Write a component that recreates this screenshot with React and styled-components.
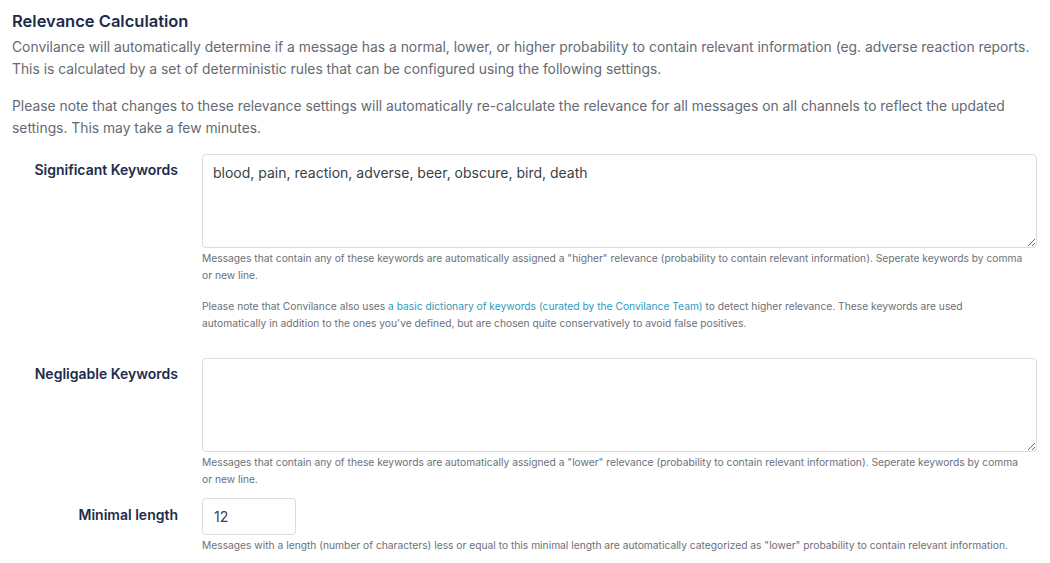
import React from "react";
import styled, { createGlobalStyle } from "styled-components";

const Global = createGlobalStyle`
  html, body { margin: 0; padding: 0; background: #fff; }
  body { font-family: Inter, "Noto Sans", sans-serif; -webkit-font-smoothing: antialiased; }
`;

const Page = styled.div`
  padding: 10px 13px 0 12px;
`;

const Title = styled.h2`
  margin: 0 0 4px;
  font-size: 16.5px;
  font-weight: 600;
  color: #1d2b4c;
  line-height: 22px;
`;

const Lead = styled.p`
  margin: 0 0 15px;
  font-size: 13.85px;
  line-height: 22px;
  color: #656a73;
  font-weight: 400;
`;

const Form = styled.div`
  display: grid;
  grid-template-columns: 166px 1fr;
  column-gap: 24px;
  margin-top: 5px;
`;

const Label = styled.label`
  text-align: right;
  font-size: 14px;
  font-weight: 600;
  color: #1d2b4c;
  padding-top: ${(p) => p.$top || 8}px;
`;

const Field = styled.div`
  display: flex;
  flex-direction: column;
  margin-bottom: ${(p) => p.$mb || 0}px;
`;

const TextArea = styled.textarea`
  box-sizing: border-box;
  width: 100%;
  height: 94px;
  border: 1px solid #dcdcdc;
  border-radius: 4px;
  padding: 9px 10px;
  font-family: Inter, "Noto Sans", sans-serif;
  font-size: 14px;
  color: #3a3f47;
  resize: vertical;
  outline: none;
  display: block;
`;

const Input = styled.input`
  box-sizing: border-box;
  width: 94px;
  height: 37px;
  border: 1px solid #dcdcdc;
  border-radius: 4px;
  padding: 0 11px;
  font-family: Inter, "Noto Sans", sans-serif;
  font-size: 14px;
  color: #3a3f47;
  outline: none;
`;

const Help = styled.p`
  margin: ${(p) => p.$mt || 2}px 0 0;
  padding-right: 11px;
  font-size: 10.25px;
  line-height: 17px;
  color: #6b7079;
  font-weight: 400;
`;

const Link = styled.a`
  color: #2f9bbd;
  text-decoration: none;
`;

export default function App() {
  return (
    <Page>
      <Global />
      <Title>Relevance Calculation</Title>
      <Lead>
        Convilance will automatically determine if a message has a normal, lower, or higher probability to contain relevant information (eg. adverse reaction reports.
        <br />
        This is calculated by a set of deterministic rules that can be configured using the following settings.
      </Lead>
      <Lead>
        Please note that changes to these relevance settings will automatically re-calculate the relevance for all messages on all channels to reflect the updated settings. This may take a few minutes.
      </Lead>
      <Form>
        <Label $top={7}>Significant Keywords</Label>
        <Field $mb={26}>
          <TextArea defaultValue="blood, pain, reaction, adverse, beer, obscure, bird, death" />
          <Help>
            Messages that contain any of these keywords are automatically assigned a "higher" relevance (probability to contain relevant information). Seperate keywords by comma or new line.
          </Help>
          <Help $mt={14}>
            Please note that Convilance also uses{" "}
            <Link href="#">a basic dictionary of keywords (curated by the Convilance Team)</Link>{" "}
            to detect higher relevance. These keywords are used automatically in addition to the ones you've defined, but are chosen quite conservatively to avoid false positives.
          </Help>
        </Field>
        <Label $top={7}>Negligable Keywords</Label>
        <Field $mb={10}>
          <TextArea defaultValue="" />
          <Help>
            Messages that contain any of these keywords are automatically assigned a "lower" relevance (probability to contain relevant information). Seperate keywords by comma or new line.
          </Help>
        </Field>
        <Label $top={8}>Minimal length</Label>
        <Field>
          <Input defaultValue="12" />
          <Help>
            Messages with a length (number of characters) less or equal to this minimal length are automatically categorized as "lower" probability to contain relevant information.
          </Help>
        </Field>
      </Form>
    </Page>
  );
}
